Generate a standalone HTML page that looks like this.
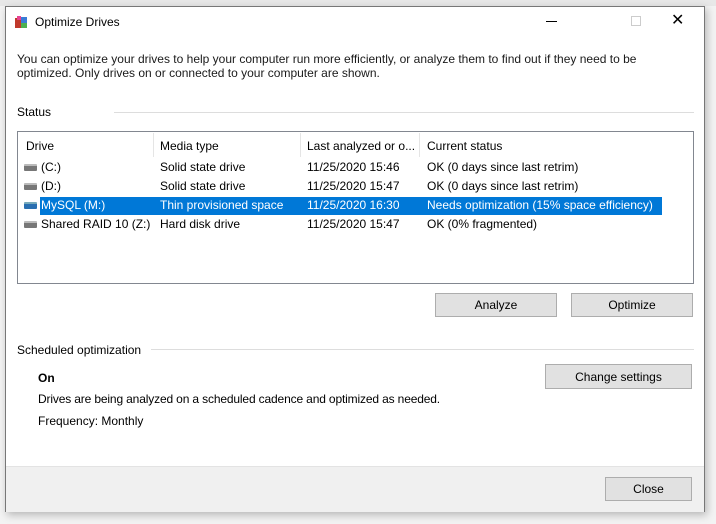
<html><head><style>
body{margin:0;width:716px;height:524px;background:#f3f3f3;position:relative;overflow:hidden;font-family:"Liberation Sans",sans-serif;font-size:12px;color:#000}
.a{position:absolute;white-space:nowrap}
.win{position:absolute;left:5px;top:6px;width:698px;height:504px;background:#fff;border:1px solid #777;box-shadow:2px 3px 8px rgba(0,0,0,.25)}
.btn{position:absolute;background:#e1e1e1;border:1px solid #adadad;text-align:center;line-height:23px;box-sizing:border-box}
.drv{display:inline-block;width:13px;height:5px;background:#777;border-top:2px solid #bbb;border-radius:1px;margin-right:4px;vertical-align:middle}
</style></head><body>
<div class="a" style="left:0;top:0;width:716px;height:6px;background:#e8e8e8"></div>
<div class="win">
 <svg class="a" style="left:8px;top:8px" width="14" height="14"><rect x="1" y="3" width="6" height="10" fill="#c0392b"/><rect x="7" y="2" width="6" height="6" fill="#3a7bd5"/><rect x="7" y="8" width="6" height="5" fill="#4caf50"/><rect x="3" y="1" width="4" height="4" fill="#e84393"/></svg>
 <div class="a" style="left:29px;top:8px;font-size:12px">Optimize Drives</div>
 <div class="a" style="left:540px;top:14px;width:11px;height:1px;background:#000"></div>
 <div class="a" style="left:625px;top:9px;width:8px;height:8px;border:1px solid #ccc"></div>
 <div class="a" style="left:665px;top:3px;font-size:16px">✕</div>
 <div class="a" style="left:11px;top:45px;line-height:14px;color:#1a1a1a">You can optimize your drives to help your computer run more efficiently, or analyze them to find out if they need to be<br>optimized. Only drives on or connected to your computer are shown.</div>
 <div class="a" style="left:11px;top:98px">Status</div>
 <div class="a" style="left:108px;top:105px;width:580px;height:1px;background:#ddd"></div>
 <div class="a" style="left:11px;top:124px;width:675px;height:151px;border:1px solid #828790"></div>
 <div class="a" style="left:147px;top:126px;width:1px;height:24px;background:#e5e5e5"></div>
 <div class="a" style="left:294px;top:126px;width:1px;height:24px;background:#e5e5e5"></div>
 <div class="a" style="left:413px;top:126px;width:1px;height:24px;background:#e5e5e5"></div>
 <div class="a" style="left:20px;top:132px">Drive</div>
 <div class="a" style="left:154px;top:132px">Media type</div>
 <div class="a" style="left:301px;top:132px">Last analyzed or o...</div>
 <div class="a" style="left:421px;top:132px">Current status</div>
 <div class="a" style="left:34px;top:190px;width:622px;height:18px;background:#0078d7"></div>
 <div class="a" style="left:18px;top:153px"><span class="drv"></span>(C:)</div>
 <div class="a" style="left:18px;top:172px"><span class="drv"></span>(D:)</div>
 <div class="a" style="left:18px;top:191px;color:#fff"><span class="drv" style="background:#2a6fb0;border-top-color:#7ab"></span>MySQL (M:)</div>
 <div class="a" style="left:18px;top:210px"><span class="drv"></span>Shared RAID 10 (Z:)</div>
 <div class="a" style="left:154px;top:153px">Solid state drive</div>
 <div class="a" style="left:154px;top:172px">Solid state drive</div>
 <div class="a" style="left:154px;top:191px;color:#fff">Thin provisioned space</div>
 <div class="a" style="left:154px;top:210px">Hard disk drive</div>
 <div class="a" style="left:301px;top:153px">11/25/2020 15:46</div>
 <div class="a" style="left:301px;top:172px">11/25/2020 15:47</div>
 <div class="a" style="left:301px;top:191px;color:#fff">11/25/2020 16:30</div>
 <div class="a" style="left:301px;top:210px">11/25/2020 15:47</div>
 <div class="a" style="left:421px;top:153px">OK (0 days since last retrim)</div>
 <div class="a" style="left:421px;top:172px">OK (0 days since last retrim)</div>
 <div class="a" style="left:421px;top:191px;color:#fff">Needs optimization (15% space efficiency)</div>
 <div class="a" style="left:421px;top:210px">OK (0% fragmented)</div>
 <div class="btn" style="left:429px;top:286px;width:122px;height:24px">Analyze</div>
 <div class="btn" style="left:565px;top:286px;width:122px;height:24px">Optimize</div>
 <div class="a" style="left:11px;top:336px">Scheduled optimization</div>
 <div class="a" style="left:145px;top:342px;width:543px;height:1px;background:#ddd"></div>
 <div class="a" style="left:32px;top:364px;font-weight:bold">On</div>
 <div class="btn" style="left:539px;top:357px;width:147px;height:25px;line-height:24px">Change settings</div>
 <div class="a" style="left:32px;top:385px;letter-spacing:-0.15px">Drives are being analyzed on a scheduled cadence and optimized as needed.</div>
 <div class="a" style="left:32px;top:407px">Frequency: Monthly</div>
 <div class="a" style="left:0;top:459px;width:698px;height:45px;background:#f0f0f0;border-top:1px solid #e3e3e3"></div>
 <div class="btn" style="left:599px;top:470px;width:87px;height:24px">Close</div>
</div>
</body></html>
